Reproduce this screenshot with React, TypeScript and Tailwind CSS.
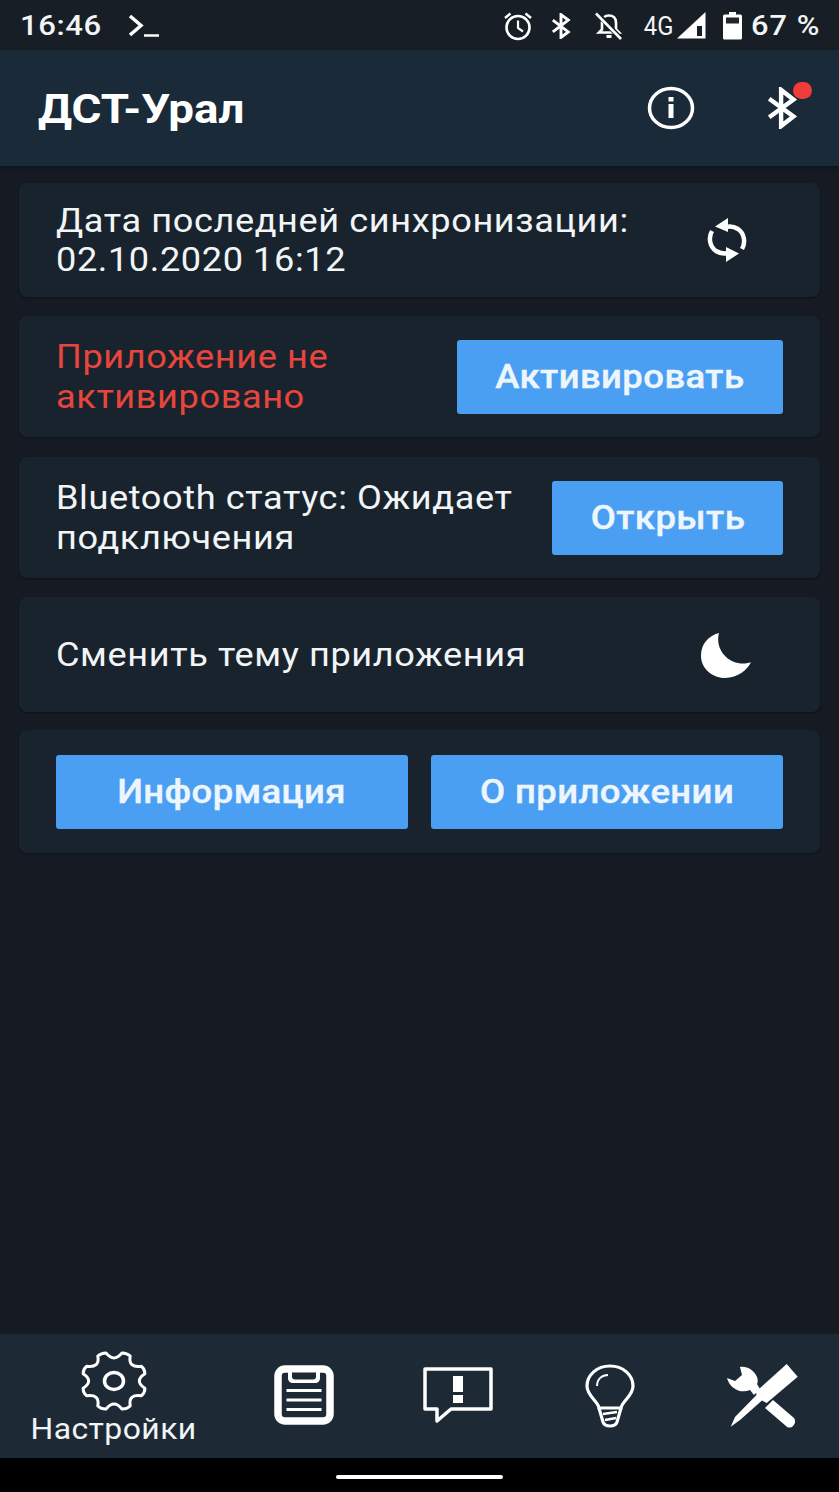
import type { ReactNode } from "react";

const W = "#ffffff";

function gearPath() {
  // 8 teeth, slightly wider than tall like the reference
  const pt = (deg: number, r: number) => {
    const a = (deg * Math.PI) / 180;
    return `${(35 + Math.sin(a) * r * 1.1).toFixed(1)} ${(31 - Math.cos(a) * r).toFixed(1)}`;
  };
  let d = "";
  for (let k = 0; k < 8; k++) {
    const a = 22.5 + k * 45;
    d += `${k === 0 ? "M" : "L"}${pt(a - 8, 29)} Q${pt(a, 30.5)} ${pt(a + 8, 29)} Q${pt(a + 22.5, 18)} `;
    d += `${pt(a + 37, 29)} `;
  }
  return d + "Z";
}

function Card({ children, className }: { children: ReactNode; className: string }) {
  return (
    <div className={`flex items-center rounded-lg bg-[#18232e] pl-[37px] pr-[37px] shadow-[0_1px_2px_rgba(0,0,0,0.35)] ${className}`}>
      {children}
    </div>
  );
}

function Btn({ children, className }: { children: ReactNode; className: string }) {
  return (
    <div className={`flex h-[74px] items-center justify-center rounded-[3px] bg-[#4b9ff2] pt-[1px] text-[33px] font-medium tracking-[0.4px] text-[#eef6fd] ${className}`}>
      <span className="whitespace-nowrap scale-x-[1.105] [-webkit-text-stroke:0.4px_#eef6fd]">{children}</span>
    </div>
  );
}

function StatusIcons() {
  return (
    <div className="flex items-center">
      {/* alarm */}
      <svg width="30" height="30" viewBox="0 0 30 30" fill="none" stroke={W} strokeWidth="2.6">
        <circle cx="15" cy="16.5" r="11.5" />
        <path d="M15 9.5v7.5l5 3.5" strokeWidth="2.2" />
        <path d="M2 7l5.5-4.5M28 7l-5.5-4.5" strokeWidth="2.4" />
      </svg>
      {/* bluetooth */}
      <svg width="20" height="26" viewBox="0 0 22 28" fill="none" stroke={W} strokeWidth="3.2" className="ml-[18px]">
        <path d="M2 7.5l17 13-8 6V1.5l8 6-17 13" />
      </svg>
      {/* bell off */}
      <svg width="30" height="28" viewBox="0 0 30 28" fill="none" stroke={W} strokeWidth="2.6" className="ml-[23px]">
        <path d="M8 10.5C8 6 11 3.5 15 3.5s7 2.500 7 7v7l3 3H5l3-3z" />
        <path d="M12.500 24.500h5" strokeWidth="3" />
        <path d="M3 1l24 26" stroke="#171e26" strokeWidth="5" />
        <path d="M2 1.500l25 25.500" />
      </svg>
      <span className="ml-[19px] text-[25px] leading-none text-[#f2f4f5] scale-x-[0.95]">4G</span>
      {/* signal */}
      <svg width="30" height="28" viewBox="0 0 30 28" className="ml-[3px]">
        <path d="M0 26.500L28.500 0v26.500z" fill={W} />
        <path d="M20 14h5v10h-5z" fill="#171e26" />
      </svg>
      {/* battery */}
      <svg width="19" height="28" viewBox="0 0 19 28" className="ml-[16px]">
        <path d="M6 0h7v2.500h4.500a1.500 1.500 0 0 1 1.500 1.500v22a1.500 1.500 0 0 1-1.500 1.500H1.500A1.500 1.500 0 0 1 0 26V4a1.500 1.500 0 0 1 1.500-1.500H6z" fill={W} />
        <path d="M3 5.500h13v6H3z" fill="#20262c" />
      </svg>
    </div>
  );
}

export default function App() {
  // the reference is stretched sideways by about a tenth, so the text is too
  const text = "origin-left scale-x-[1.095] whitespace-nowrap text-[33px] leading-[39.500px] tracking-[0.55px]";
  return (
    <div className="flex h-[1492px] w-[839px] flex-col overflow-hidden bg-[#151a23] text-white [font-family:'Roboto',sans-serif]">
      {/* status bar */}
      <div className="flex h-[50px] shrink-0 items-center justify-between bg-[#171e26] pl-[20px] pr-[19px] pt-[2px]">
        <div className="flex items-center">
          <span className="w-[81px] origin-left scale-x-[1.11] text-[28px] font-medium leading-none tracking-[0.5px] text-[#f2f4f5]">16:46</span>
          <svg width="32" height="24" viewBox="0 0 32 24" fill="none" stroke={W} strokeWidth="3.5" className="ml-[27px]">
            <path d="M2 2l11 9.500L2 21" />
            <path d="M16 21.500h15" strokeWidth="2.500" />
          </svg>
        </div>
        <div className="flex items-center">
          <StatusIcons />
          <span className="ml-[9px] w-[69px] origin-left scale-x-[1.1] whitespace-nowrap text-[28px] font-medium leading-none tracking-[0.9px] text-[#f2f4f5]">67 %</span>
        </div>
      </div>

      {/* header */}
      <div className="flex h-[116px] shrink-0 items-center bg-[#1b2a38] pl-[38px] shadow-[0_2px_4px_rgba(0,0,0,0.3)]">
        <span className="mt-[3px] origin-left scale-x-[1.115] text-[41px] font-bold leading-none">ДСТ-Урал</span>
        <svg width="48" height="44" viewBox="0 0 48 44" fill="none" className="ml-auto mr-[72px] mt-[-1px]">
          <ellipse cx="24" cy="22" rx="21.500" ry="19.500" stroke={W} strokeWidth="3.500" />
          <rect x="21.500" y="18" width="5" height="14" fill={W} />
          <rect x="21.500" y="11" width="5" height="4.500" fill={W} />
        </svg>
        <div className="relative mr-[42px] mt-[-1px] h-[42px] w-[30px]">
          <svg width="30" height="42" viewBox="0 0 34 46" fill="none" stroke={W} strokeWidth="5">
            <path d="M2.500 12.500L30 32.500 16 43.500V2.500L30 13.500 2.500 33.500" />
          </svg>
          <div className="absolute left-[26px] top-[-5px] h-[17px] w-[19px] rounded-full bg-[#f03d3a]" />
        </div>
      </div>

      {/* cards */}
      <div className="flex flex-1 flex-col px-[19px] pt-[17px]">
        <Card className="h-[114px]">
          <div className={`${text} text-[#f2f5f6]`}>
            Дата последней синхронизации:
            <br />
            02.10.2020 16:12
          </div>
          <svg width="40" height="46" viewBox="0 0 40 46" fill="none" className="ml-auto mr-[36px]">
            <path d="M35 32c4-7 2-16-4-20-4-2.500-8-3-12-2" stroke={W} strokeWidth="4.500" />
            <path d="M21 1L8 9.500 21 15z" fill={W} />
            <path d="M5 14c-4 7-2 16 4 20 4 2.500 8 3 12 2" stroke={W} strokeWidth="4.500" />
            <path d="M19 45l13-8.500L19 30z" fill={W} />
          </svg>
        </Card>

        <Card className="mt-[19px] h-[121px]">
          <div className={`${text} text-[#e8453c]`}>
            Приложение не
            <br />
            активировано
          </div>
          <Btn className="ml-auto w-[326px]">Активировать</Btn>
        </Card>

        <Card className="mt-[20px] h-[121px]">
          <div className={`${text} text-[#f2f5f6]`}>
            Bluetooth статус: Ожидает
            <br />
            подключения
          </div>
          <Btn className="ml-auto w-[231px]">Открыть</Btn>
        </Card>

        <Card className="mt-[19px] h-[115px]">
          <div className={`${text} text-[#f2f5f6]`}>Сменить тему приложения</div>
          <svg width="52" height="46" viewBox="0 0 52 46" className="ml-auto mr-[31px]">
            <path d="M19 1C8 4 1 12 1 24c0 12 11 22 24 22 13 0 23-9 26-16-3 1.500-8 2-13 1C26 29 15 16 19 1z" fill={W} />
          </svg>
        </Card>

        <Card className="mt-[18px] h-[123px] gap-[23px]">
          <Btn className="w-[352px]">Информация</Btn>
          <Btn className="w-[352px]">О приложении</Btn>
        </Card>
      </div>

      {/* bottom nav */}
      <div className="flex h-[124px] shrink-0 items-start bg-[#1d2a36] pt-[16px]">
        <div className="ml-[31px] flex w-[165px] flex-col items-center">
          <svg width="70" height="62" viewBox="0 0 70 62" fill="none" stroke={W} strokeWidth="3">
            <path d={gearPath()} strokeLinejoin="round" />
            <ellipse cx="35" cy="31" rx="9.500" ry="8.500" strokeWidth="3.500" />
          </svg>
          <span className="mt-[-1px] scale-x-[1.1] whitespace-nowrap text-[29px] leading-[36px] tracking-[0.4px] text-[#f2f5f6]">Настройки</span>
        </div>

        {/* notes */}
        <svg width="60" height="60" viewBox="0 0 60 60" fill="none" className="ml-[78px] mt-[15px]">
          <rect x="4" y="4" width="52" height="52" rx="7" stroke={W} strokeWidth="7.500" />
          <path d="M14 6h32v7c0 3-2 5-5 5H19c-3 0-5-2-5-5z" fill={W} />
          <path d="M18 7.500h24v4c0 2-1 3-3 3H21c-2 0-3-1-3-3z" fill="#1d2a36" />
          <path d="M12.500 25.500h35M12.500 35h35M12.500 44.500h35" stroke={W} strokeWidth="3.200" />
        </svg>

        {/* report */}
        <svg width="72" height="60" viewBox="0 0 72 60" fill="none" className="ml-[88px] mt-[17px]">
          <path d="M3 2h66v40H29L15 54V42H3z" stroke={W} strokeWidth="3.500" strokeLinejoin="round" />
          <rect x="31" y="9" width="10" height="16" fill={W} />
          <rect x="31" y="28" width="10" height="8" fill={W} />
        </svg>

        {/* bulb */}
        <svg width="50" height="64" viewBox="0 0 50 64" fill="none" stroke={W} strokeWidth="3.200" className="ml-[91px] mt-[14px]">
          <path d="M14 44C13 37 2 32 2 22 2 11 12 2 25 2s23 9 23 20c0 10-11 15-12 22z" />
          <path d="M12 22c0-7 5-11 11-11" strokeWidth="2" />
          <path d="M14 44l4 14c1 3 3 4 7 4s6-1 7-4l4-14" />
          <path d="M18 50l14-2M20 56l11-2" strokeWidth="2.600" />
        </svg>

        {/* tools */}
        <svg width="72" height="64" viewBox="0 0 72 64" className="ml-[92px] mt-[14px]">
          {/* wrench head */}
          <path d="M13 3C20 2 27 6 30 13 31 16 31 18 30 20L33 25 27 31 23 26C14 30 3 25 0 14L8 17 15 11z" fill={W} />
          {/* wrench handle */}
          <path d="M46 36L67 54c2 3 1 6-1 8s-5 2-7 0L38 44z" fill={W} />
          {/* gap round the shaft */}
          <path d="M25 34L34 26" stroke="#1d2a36" strokeWidth="1.500" />
          {/* screwdriver */}
          <path d="M59.700 0L70.700 12.700 39.700 39 35 36.500 13 56 3.700 62.700 8 53 29.500 31 29 27.700z" fill={W} />
        </svg>
      </div>

      {/* gesture bar */}
      <div className="flex h-[34px] shrink-0 justify-center bg-black pt-[17px]">
        <div className="h-[4px] w-[167px] rounded-full bg-white" />
      </div>
    </div>
  );
}
